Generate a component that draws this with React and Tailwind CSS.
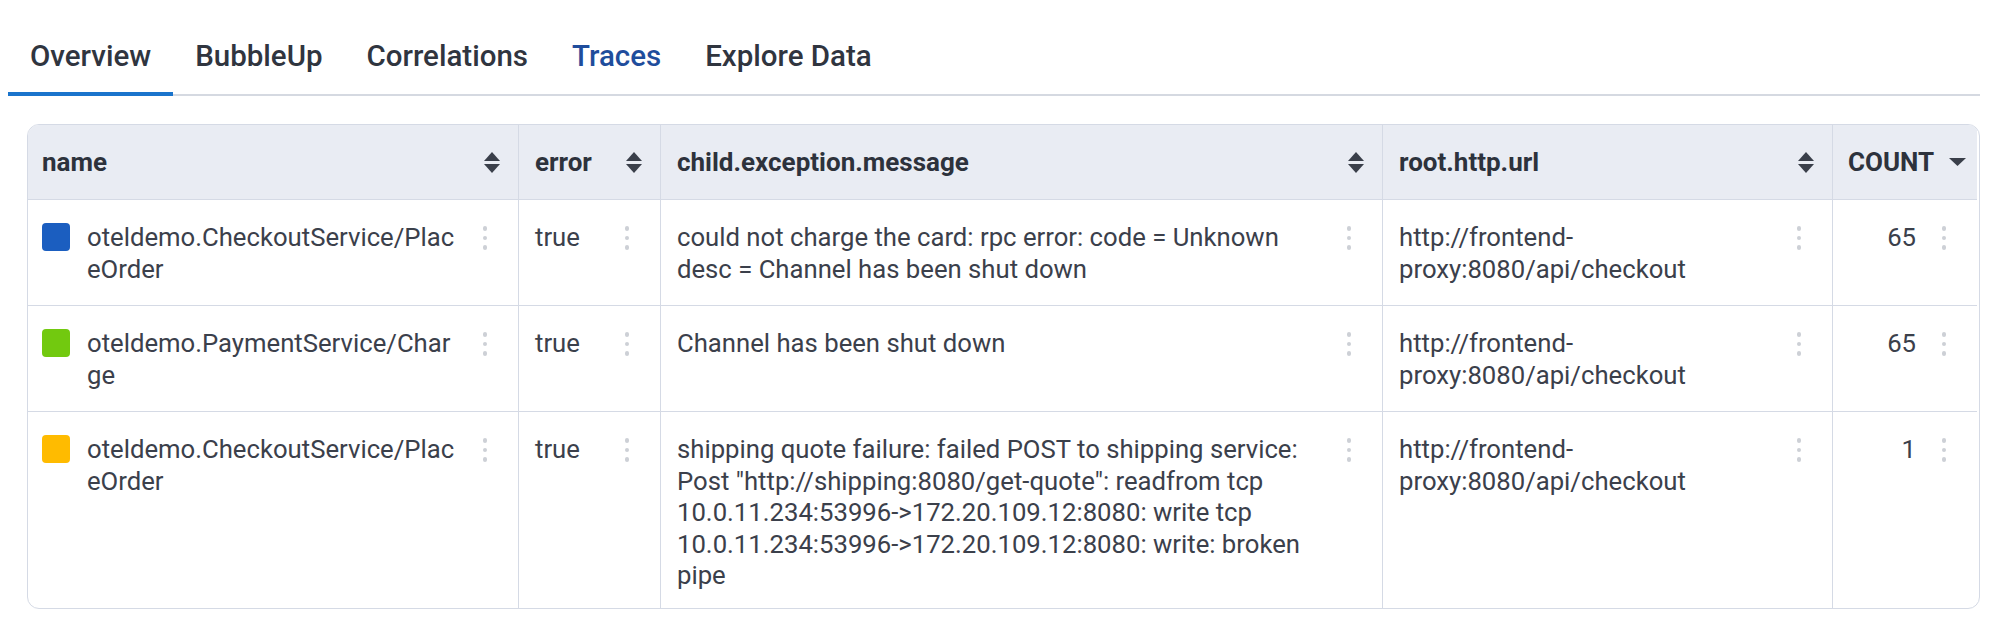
import React from 'react';

const rows = [
  {
    color: 'bg-[#1b5ec0]',
    name: 'oteldemo.CheckoutService/PlaceOrder',
    error: 'true',
    message: 'could not charge the card: rpc error: code = Unknown desc = Channel has been shut down',
    url: 'http://frontend-proxy:8080/api/checkout',
    count: 65,
  },
  {
    color: 'bg-[#72c90f]',
    name: 'oteldemo.PaymentService/Charge',
    error: 'true',
    message: 'Channel has been shut down',
    url: 'http://frontend-proxy:8080/api/checkout',
    count: 65,
  },
  {
    color: 'bg-[#ffbb00]',
    name: 'oteldemo.CheckoutService/PlaceOrder',
    error: 'true',
    message:
      'shipping quote failure: failed POST to shipping service: Post "http://shipping:8080/get-quote": readfrom tcp 10.0.11.234:53996->172.20.109.12:8080: write tcp 10.0.11.234:53996->172.20.109.12:8080: write: broken pipe',
    url: 'http://frontend-proxy:8080/api/checkout',
    count: 1,
  },
];

const tabs = ['Overview', 'BubbleUp', 'Correlations', 'Traces', 'Explore Data'];

const SortIcon = () => (
  <svg width="16" height="21" viewBox="0 0 16 21" className="shrink-0">
    <path d="M8 0 L16 9 L0 9 Z" fill="#3a3f4a" />
    <path d="M0 12 L16 12 L8 21 Z" fill="#3a3f4a" />
  </svg>
);

const Caret = () => (
  <svg width="17" height="8" viewBox="0 0 17 8" className="shrink-0">
    <path d="M0 0 L17 0 L8.5 8 Z" fill="#3a3f4a" />
  </svg>
);

const Dots = () => (
  <div className="w-[20px] h-[31.5px] shrink-0 flex flex-col items-center justify-center gap-[5px]">
    <span className="w-[4.5px] h-[4.5px] rounded-full bg-[#cdd0d6]" />
    <span className="w-[4.5px] h-[4.5px] rounded-full bg-[#cdd0d6]" />
    <span className="w-[4.5px] h-[4.5px] rounded-full bg-[#cdd0d6]" />
  </div>
);

const HeadCell = ({ label, last, pl = 'pl-4', children }) => (
  <div
    className={`h-[75px] flex items-center bg-[#e9ecf3] ${pl} pr-[18px] border-b border-[#d5dae5] ${
      last ? '' : 'border-r'
    }`}
  >
    {children || (
      <>
        <span className="flex-1 font-bold text-[26px] text-[#2d323c]">{label}</span>
        <SortIcon />
      </>
    )}
  </div>
);

export default function App() {
  return (
    <div
      className="bg-white w-[1999px] h-[624px] pl-2 pr-[19px] pt-[18px] text-[#3b404b]"
      style={{ fontFamily: 'Roboto, "Liberation Sans", sans-serif' }}
    >
      <div className="flex border-b-2 border-[#d5d9e1]">
        {tabs.map((t, i) => (
          <div
            key={t}
            className={`px-[22px] pt-[20px] pb-[18px] -mb-[2px] text-[29.5px] leading-[36px] font-medium border-b-4 ${
              i === 0 ? 'border-[#1a74cc]' : 'border-transparent'
            } ${t === 'Traces' ? 'text-[#1f4d9c]' : 'text-[#30353f]'}`}
          >
            {t}
          </div>
        ))}
      </div>

      <div className="ml-[19px] mt-[28px] border border-[#d5dae5] rounded-[12px] overflow-hidden">
        <div className="grid grid-cols-[491px_142px_722px_450px_144px]">
          <HeadCell label="name" pl="pl-[14px]" />
          <HeadCell label="error" />
          <HeadCell label="child.exception.message" />
          <HeadCell label="root.http.url" />
          <HeadCell last pl="pl-[15px]">
            <span className="flex-1 font-bold text-[26px] text-[#2d323c] text-right pr-[15px]">COUNT</span>
            <Caret />
          </HeadCell>

          {rows.map((r, i) => {
            const border = i < rows.length - 1 ? 'border-b' : '';
            const cell = `min-h-[106px] pt-[22px] pb-[16px] pr-[23px] flex items-start border-[#d5dae5] ${border}`;
            const text = 'text-[25.7px] leading-[31.5px]';
            return (
              <React.Fragment key={i}>
                <div className={`${cell} pl-[14px] border-r`}>
                  <span className={`w-[28px] h-[28px] mt-[1px] rounded-[4px] shrink-0 ${r.color}`} />
                  <span className={`ml-[17px] mr-[16px] flex-1 min-w-0 break-all ${text}`}>{r.name}</span>
                  <Dots />
                </div>
                <div className={`${cell} pl-4 border-r`}>
                  <span className={`flex-1 ${text}`}>{r.error}</span>
                  <Dots />
                </div>
                <div className={`${cell} pl-4 border-r`}>
                  <span className={`flex-1 mr-[10px] min-w-0 ${text}`}>{r.message}</span>
                  <Dots />
                </div>
                <div className={`${cell} pl-4 border-r`}>
                  <span className={`flex-1 mr-[10px] min-w-0 ${text}`}>{r.url}</span>
                  <Dots />
                </div>
                <div className={`${cell} pl-4`}>
                  <span className={`flex-1 mr-[18px] text-right ${text}`}>{r.count}</span>
                  <Dots />
                </div>
              </React.Fragment>
            );
          })}
        </div>
      </div>
    </div>
  );
}
